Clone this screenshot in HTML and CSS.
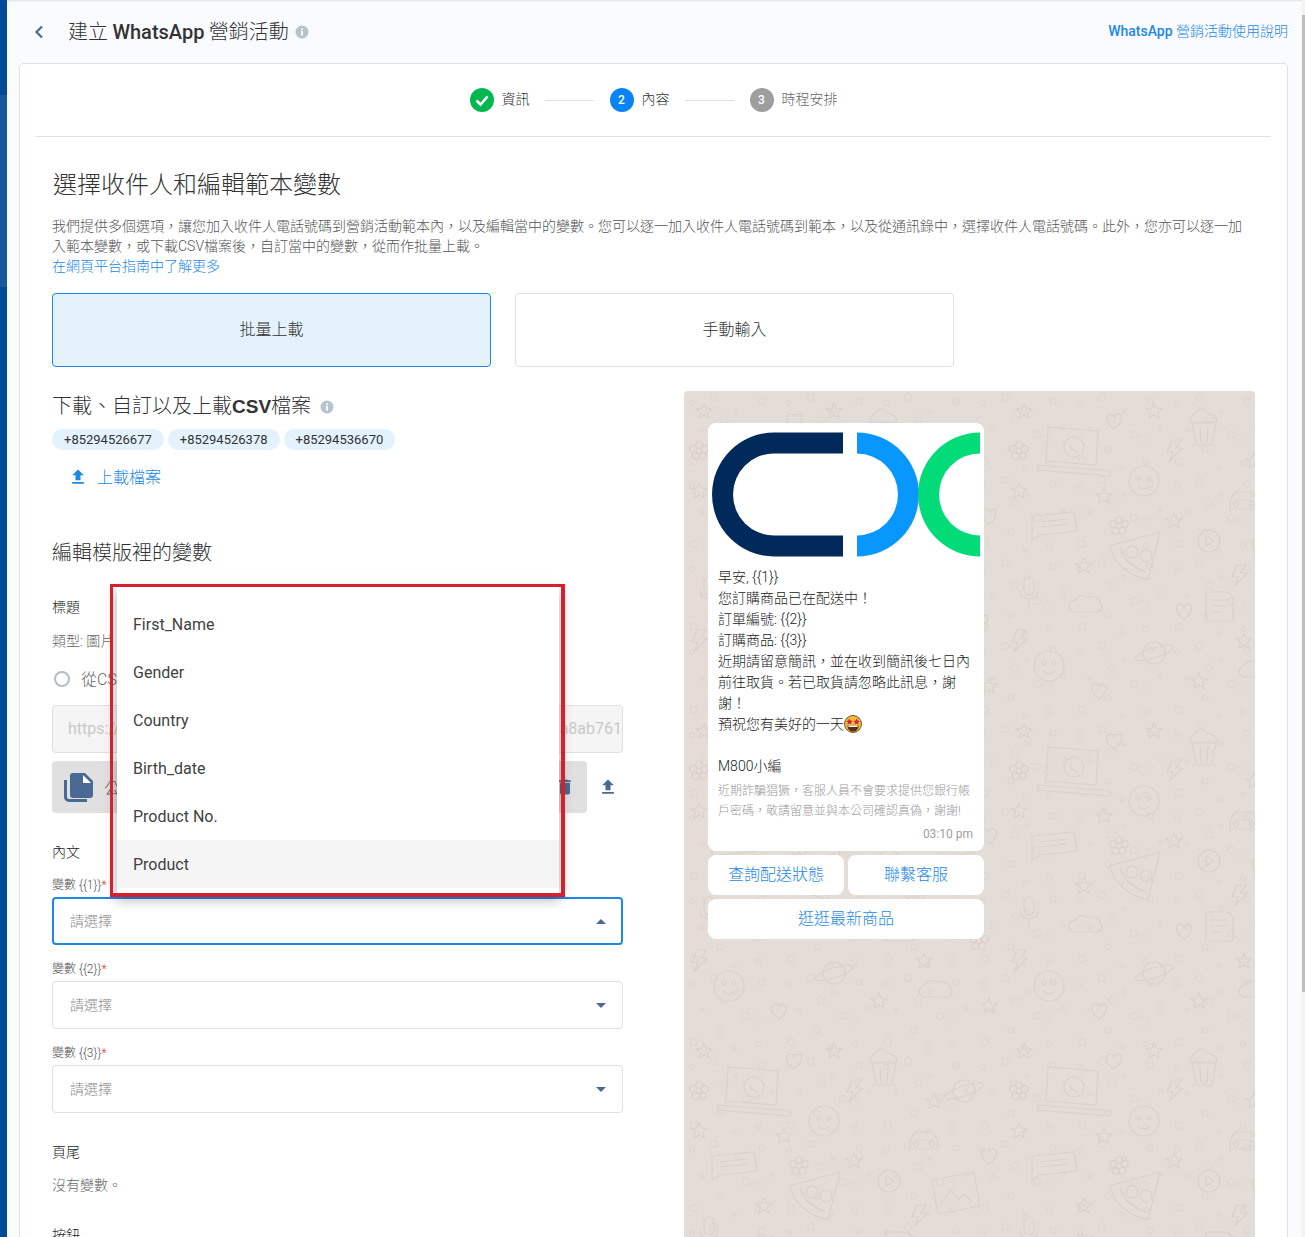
FILE: index.html
```html
<!DOCTYPE html>
<html lang="zh-Hant">
<head>
<meta charset="utf-8">
<title>建立 WhatsApp 營銷活動</title>
<link rel="stylesheet" href="styles.css">
</head>
<body>
<div class="rail">
  <div class="rail-a"></div>
  <div class="rail-b"></div>
  <div class="rail-c"></div>
</div>

<div class="app">
  <header class="topbar">
    <div class="topbar-left">
      <svg class="back" viewBox="0 0 12 16"><path d="M9 2.500 3.500 8 9 13.500" fill="none" stroke="#4a6a94" stroke-width="2.200"/></svg>
      <h1 class="title">建立 <b>WhatsApp</b> 營銷活動</h1>
      <svg class="info" viewBox="0 0 14 14"><circle cx="7" cy="7" r="6.500" fill="#b6c2cc"/><rect x="6.100" y="6" width="1.800" height="4.600" fill="#fff"/><rect x="6.100" y="3.400" width="1.800" height="1.700" fill="#fff"/></svg>
    </div>
    <a class="help"><b>WhatsApp</b> 營銷活動使用說明</a>
  </header>

  <main class="card">
    <div class="stepper">
      <div class="step">
        <span class="dot dot-done"><svg viewBox="0 0 24 24" class="check"><path d="M6.500 12.500 10.500 16.500 17.500 8.500" fill="none" stroke="#fff" stroke-width="2.600"/></svg></span>
        <span class="step-label">資訊</span>
      </div>
      <span class="step-line"></span>
      <div class="step">
        <span class="dot dot-active">2</span>
        <span class="step-label">內容</span>
      </div>
      <span class="step-line"></span>
      <div class="step step-todo">
        <span class="dot dot-todo">3</span>
        <span class="step-label">時程安排</span>
      </div>
    </div>
    <div class="divider"></div>

    <div class="content">
      <h2 class="page-heading">選擇收件人和編輯範本變數</h2>
      <p class="intro">我們提供多個選項，讓您加入收件人電話號碼到營銷活動範本內，以及編輯當中的變數。您可以逐一加入收件人電話號碼到範本，以及從通訊錄中，選擇收件人電話號碼。此外，您亦可以逐一加入範本變數，或下載CSV檔案後，自訂當中的變數，從而作批量上載。<br><a class="link">在網頁平台指南中了解更多</a></p>

      <div class="tabs">
        <div class="tab tab-on"><span class="nudge">批量上載</span></div>
        <div class="tab"><span class="nudge">手動輸入</span></div>
      </div>

      <div class="columns">
        <section class="col-left">
          <h3 class="section-title">下載、自訂以及上載<b class="csv">CSV</b>檔案
            <svg class="info info-inline" viewBox="0 0 14 14"><circle cx="7" cy="7" r="6.500" fill="#b6c2cc"/><rect x="6.100" y="6" width="1.800" height="4.600" fill="#fff"/><rect x="6.100" y="3.400" width="1.800" height="1.700" fill="#fff"/></svg>
          </h3>
          <div class="chips">
            <span class="chip">+85294526677</span>
            <span class="chip">+85294526378</span>
            <span class="chip">+85294536670</span>
          </div>
          <a class="upload-link">
            <svg class="icon20" viewBox="0 0 24 24"><path fill="#1e88e5" d="M9 16h6v-6h4l-7-7-7 7h4zm-4 2h14v2H5z"/></svg>
            <span class="nudge">上載檔案</span>
          </a>

          <h3 class="section-title section-edit">編輯模版裡的變數</h3>
          <div class="field-title ft-header">標題</div>
          <div class="field-type">類型: 圖片</div>
          <label class="radio-row"><span class="radio"></span><span class="nudge">從CSV</span></label>
          <div class="url-input"><span class="nudge">https://</span><span class="nudge">da8ab761</span></div>
          <div class="file-row">
            <div class="file-box">
              <svg class="file-icon" viewBox="0 0 30 29">
                <path fill="#4a6a94" d="M0 7h3v17a2 2 0 0 0 2 2h18v3H5a5 5 0 0 1-5-5z"/>
                <path fill="#4a6a94" d="M9 0h12l8 8v14a3 3 0 0 1-3 3H9a3 3 0 0 1-3-3V3a3 3 0 0 1 3-3z"/>
                <path fill="#fff" d="M19 2l8 8h-8z"/>
              </svg>
              <span class="file-name">公</span>
              <svg class="icon20" viewBox="0 0 24 24"><path fill="#4a6a94" d="M6 19c0 1.100.9 2 2 2h8c1.100 0 2-.9 2-2V7H6v12zM19 4h-3.500l-1-1h-5l-1 1H5v2h14V4z"/></svg>
            </div>
            <svg class="icon20" viewBox="0 0 24 24"><path fill="#4a6a94" d="M9 16h6v-6h4l-7-7-7 7h4zm-4 2h14v2H5z"/></svg>
          </div>

          <div class="field-title ft-body">內文</div>
          <div class="var-label var-first">變數 {{1}}<i>*</i></div>
          <div class="select select-focus"><span class="nudge">請選擇</span><span class="caret caret-up"></span></div>
          <div class="var-label">變數 {{2}}<i>*</i></div>
          <div class="select"><span class="nudge">請選擇</span><span class="caret"></span></div>
          <div class="var-label">變數 {{3}}<i>*</i></div>
          <div class="select"><span class="nudge">請選擇</span><span class="caret"></span></div>

          <div class="field-title ft-footer">頁尾</div>
          <div class="field-note">沒有變數。</div>
          <div class="field-title ft-buttons">按鈕</div>

          <div class="menu-wrap">
            <ul class="menu">
              <li>First_Name</li>
              <li>Gender</li>
              <li>Country</li>
              <li>Birth_date</li>
              <li>Product No.</li>
              <li class="menu-hover">Product</li>
            </ul>
          </div>
        </section>

        <aside class="preview">
          <svg class="doodles" width="100%" height="100%" aria-hidden="true">
            <defs>
              <g id="d-star"><path d="M0-8 2.400-2.500 8-2.200 3.600 1.400 5 7 0 4 -5 7 -3.600 1.400 -8-2.200 -2.400-2.500z"/></g>
              <g id="d-heart"><path d="M0 8C-11 0-8-8-3-7c2 .4 3 2 3 3 0-1 1-2.600 3-3C8-8 11 0 0 8z"/></g>
              <g id="d-cloud"><path d="M-14 6a6 6 0 0 1 0-12c2-5 10-6 13-2 5-3 12 0 12 5a5 5 0 0 1-2 9z"/></g>
              <g id="d-planet"><circle r="11"/><ellipse rx="20" ry="5" transform="rotate(-18)"/></g>
              <g id="d-flower"><circle r="3"/><circle cy="-6" r="3.500"/><circle cx="5.700" cy="-1.900" r="3.500"/><circle cx="3.500" cy="4.900" r="3.500"/><circle cx="-3.500" cy="4.900" r="3.500"/><circle cx="-5.700" cy="-1.900" r="3.500"/></g>
              <g id="d-laptop"><path d="M-26-24 24-20 22 14-28 10z"/><path d="M-36 14 36 20 36 25-36 19z"/><circle r="10" cy="-4"/><path d="M-4-6c0 4 4 7 8 6"/></g>
              <g id="d-chat"><path d="M-22-10 20-14 23 5-14 9-22 14z"/><path d="M-14-4 13-7M-13 1 14-2"/></g>
              <g id="d-pizza"><path d="M-24-10C-20 8-4 20 14 24L26-24z"/><circle cx="-2" cy="-4" r="6"/><circle cx="12" cy="0" r="6"/><path d="M-14-8C-10 4 0 12 12 16"/></g>
              <g id="d-car"><path d="M-14 8v-8l5-9h17l6 9v8z"/><circle cx="-8" cy="3" r="2.500"/><circle cx="8" cy="3" r="2.500"/><path d="M-9-1h18"/></g>
              <g id="d-cup"><path d="M-12-2 -8 20H8L12-2z"/><path d="M-14-3c0-8 6-8 8-11 3-4 8-2 8 2 5 0 11 3 11 9z"/><path d="M-4 2-3 18M4 2 3 18"/></g>
              <g id="d-photo"><path d="M-22-16 20-24 26 10-16 18z"/><path d="M-14 8-3-6 4 4 10-2 18 6"/></g>
              <g id="d-face"><circle r="15"/><circle cx="-5" cy="-3" r="2"/><circle cx="5" cy="-3" r="2"/><path d="M-6 5c3 4 9 4 12 0"/></g>
              <g id="d-bolt"><path d="M-2-11 7-11 2-3 8-3-5 11-1 1-7 1z"/></g>
              <g id="d-mic"><rect x="-5" y="-14" width="10" height="18" rx="5"/><path d="M-9-1c0 12 18 12 18 0M0 10v8"/></g>
              <g id="d-play"><circle r="11"/><path d="M-3-5 5 0-3 5z"/></g>
              <g id="d-note"><path d="M-13-14H9L14-9V15H-13zM-8-6H8M-8 0H8M-8 6H3"/></g>
              <pattern id="tile-fine" width="97" height="83" patternUnits="userSpaceOnUse">
                <g fill="none" stroke="#ddd5cf" stroke-width="1.100">
                  <circle cx="8" cy="12" r="2.500"/><circle cx="30" cy="6" r="3.500"/><circle cx="52" cy="20" r="2"/>
                  <circle cx="78" cy="10" r="3"/><circle cx="18" cy="38" r="2"/><circle cx="62" cy="44" r="3.500"/>
                  <circle cx="88" cy="36" r="2"/><circle cx="36" cy="58" r="3"/><circle cx="10" cy="70" r="3.500"/>
                  <circle cx="74" cy="72" r="2.500"/><circle cx="50" cy="76" r="2"/>
                  <use href="#d-star" x="40" y="34" transform="translate(14 6) scale(.65)"/>
                  <use href="#d-heart" x="120" y="80" transform="scale(.6)"/>
                </g>
              </pattern>
              <pattern id="tile" width="320" height="320" patternUnits="userSpaceOnUse">
                <g fill="none" stroke="#dad1cb" stroke-width="1.200">
                  <use href="#d-laptop" x="70" y="60"/>
                  <use href="#d-cup" x="200" y="34"/>
                  <use href="#d-planet" x="280" y="60"/>
                  <use href="#d-face" x="140" y="90"/>
                  <use href="#d-car" x="240" y="110"/>
                  <use href="#d-chat" x="50" y="135"/>
                  <use href="#d-pizza" x="130" y="165"/>
                  <use href="#d-photo" x="270" y="165"/>
                  <use href="#d-mic" x="25" y="200"/>
                  <use href="#d-play" x="205" y="150"/>
                  <use href="#d-cloud" x="85" y="215"/>
                  <use href="#d-note" x="215" y="215"/>
                  <use href="#d-flower" x="295" y="230"/>
                  <use href="#d-planet" x="150" y="262"/>
                  <use href="#d-face" x="45" y="275"/>
                  <use href="#d-cloud" x="255" y="280"/>
                  <use href="#d-heart" x="110" y="30"/>
                  <use href="#d-heart" x="305" y="125"/>
                  <use href="#d-heart" x="180" y="220"/>
                  <use href="#d-heart" x="95" y="300"/>
                  <use href="#d-star" x="20" y="20"/>
                  <use href="#d-star" x="150" y="20"/>
                  <use href="#d-star" x="250" y="70"/>
                  <use href="#d-star" x="100" y="105"/>
                  <use href="#d-star" x="15" y="100"/>
                  <use href="#d-star" x="170" y="130"/>
                  <use href="#d-star" x="80" y="175"/>
                  <use href="#d-star" x="240" y="250"/>
                  <use href="#d-star" x="195" y="290"/>
                  <use href="#d-star" x="305" y="295"/>
                  <use href="#d-bolt" x="235" y="185"/>
                  <use href="#d-bolt" x="15" y="250"/>
                  <use href="#d-bolt" x="170" y="60"/>
                  <use href="#d-flower" x="115" y="135"/>
                  <use href="#d-flower" x="15" y="60"/>
                </g>
              </pattern>
            </defs>
            <rect width="100%" height="100%" fill="url(#tile-fine)"/>
            <rect width="100%" height="100%" fill="url(#tile)"/>
          </svg>

          <div class="chat">
            <div class="bubble">
              <svg class="logo" viewBox="0 0 268 135">
                <path fill="#012a5a" d="M131 5.500H62a62 62 0 0 0 0 124h69v-21H62a41 41 0 0 1 0-82h69z"/>
                <path fill="#0797fd" d="M145 5.500a62 62 0 0 1 0 124v-21a41 41 0 0 0 0-82z"/>
                <path fill="#02dc78" d="M268 5.500a62 62 0 0 0 0 124v-21a41 41 0 0 1 0-82z"/>
              </svg>
              <div class="bubble-text">早安, {{1}}<br>您訂購商品已在配送中！<br>訂單編號: {{2}}<br>訂購商品: {{3}}<br>近期請留意簡訊，並在收到簡訊後七日內前往取貨。若已取貨請忽略此訊息，謝謝！<br>預祝您有美好的一天<svg class="emoji" viewBox="0 0 18 18"><circle cx="9" cy="9" r="8.500" fill="#f6b93b" stroke="#4a3a1c" stroke-width=".8"/><path d="M3.500 10.500h11c0 4-2.500 6-5.500 6s-5.500-2-5.500-6z" fill="#5b2f14"/><path d="M4.500 10.500h9v1.500h-9z" fill="#fff"/><path fill="#d81f45" d="M5.400 3.600l1 2 2.100.3-1.500 1.500.4 2.100-2-1-1.900 1 .4-2.100L2.400 5.900l2.100-.3zM12.600 3.600l1 2 2.100.3-1.500 1.500.4 2.100-2-1-1.900 1 .4-2.100-1.500-1.500 2.100-.3z"/></svg><br><br>M800小編</div>
              <div class="bubble-foot">近期詐騙猖獗，客服人員不會要求提供您銀行帳戶密碼，敬請留意並與本公司確認真偽，謝謝!</div>
              <div class="bubble-time">03:10 pm</div>
            </div>
            <div class="chat-buttons">
              <div class="chat-btn"><span class="nudge">查詢配送狀態</span></div>
              <div class="chat-btn"><span class="nudge">聯繫客服</span></div>
              <div class="chat-btn chat-btn-wide"><span class="nudge">逛逛最新商品</span></div>
            </div>
          </div>
        </aside>
      </div>
    </div>
  </main>
</div>

<div class="scrollbar"><div class="scroll-thumb"></div></div>
</body>
</html>
```

FILE: styles.css
```css
* { box-sizing: border-box; }
html, body { height: 1237px; }
body {
  margin: 0;
  display: flex;
  overflow: hidden;
  background: #f9fbfe;
  font-family: Roboto, "Noto Sans CJK TC", sans-serif;
  color: #424242;
}
h1, h2, h3, p, ul { margin: 0; padding: 0; font-weight: 400; }

.nudge { padding-bottom: 3px; }
.tab .nudge, .chat-btn .nudge { padding-bottom: 5px; }

/* Left rail and scrollbar */
.rail { width: 7px; flex: none; display: flex; flex-direction: column; }
.rail-a { height: 95px; background: #004a99; }
.rail-b { height: 192px; background: #19589f; }
.rail-c { flex: 1; background: #004a99; }
.scrollbar { width: 3px; flex: none; background: #f3f3f3; padding-top: 15px; }
.scroll-thumb { height: 977px; background: #bdbdbd; }

.app {
  flex: 1;
  min-width: 0;
  padding: 0 14px 0 12px;
  box-shadow: inset 0 2px 2px -1px rgba(0, 0, 0, .1);
}

/* Top bar */
.topbar { height: 63px; display: flex; align-items: center; justify-content: space-between; }
.topbar-left { display: flex; align-items: center; padding-left: 14px; }
.back { width: 12px; height: 16px; margin-right: 23px; }
.title { font-size: 20px; line-height: 28px; font-weight: 300; color: #333; word-spacing: -.5px; }
.title b { font-weight: 500; color: #333; }
.info { width: 14px; height: 14px; margin-left: 6px; flex: none; }
.info-inline { margin-left: 4px; vertical-align: -1px; }
.help { font-size: 14px; font-weight: 300; color: #1e88e5; margin-top: -4px; }
.help b { font-weight: 500; }

/* Card */
.card {
  height: 1300px;
  background: #fff;
  border: 1px solid #e0e0e0;
  border-radius: 4px;
  overflow: hidden;
}
.stepper { height: 72px; display: flex; align-items: center; justify-content: center; }
.step { display: flex; align-items: center; gap: 8px; }
.dot {
  width: 24px; height: 24px; border-radius: 50%;
  display: flex; align-items: center; justify-content: center;
  color: #fff; font-size: 12px; font-weight: 500;
}
.dot-done { background: #00b84f; }
.dot-active { background: #0a84f5; }
.dot-todo { background: #9e9e9e; }
.check { width: 24px; height: 24px; }
.step-label { font-size: 14px; font-weight: 300; color: #333; line-height: 20px; padding-bottom: 2px; }
.step-todo .step-label { color: #666; }
.step-line { width: 49px; height: 1px; background: #e0e0e0; margin: 0 16px 0 15px; }
.divider { height: 1px; background: #e0e0e0; margin: 0 16px; }

.content { padding: 0 32px; }
.page-heading { margin: 32px 0 0 1px; font-size: 24px; line-height: 32px; font-weight: 300; color: #333; }
.intro { margin-top: 15px; font-size: 14px; line-height: 20px; font-weight: 300; color: #555; }
.link { color: #1e88e5; }

.tabs { margin-top: 17px; display: flex; gap: 24px; }
.tab {
  width: 439px; height: 74px;
  display: flex; align-items: center; justify-content: center;
  border: 1px solid #e0e0e0; border-radius: 4px;
  font-size: 16px; font-weight: 300; color: #333; background: #fff;
}
.tab-on { background: #e3f2fd; border-color: #1e88e5; }

.columns { margin-top: 24px; display: grid; grid-template-columns: 571px 571px; gap: 61px; }
.col-left { position: relative; }

.section-title { font-size: 20px; line-height: 28px; font-weight: 300; color: #333; display: block; padding-top: 1px; height: 28px; }
.csv { font-family: "Liberation Sans", sans-serif; font-size: 19px; font-weight: 700; }
.section-edit { margin-top: 49px; }

.chips { margin-top: 10px; display: flex; gap: 4px; }
.chip {
  height: 21px; padding: 0 12px; border-radius: 11px;
  background: #e3f2fd; font-size: 13px; line-height: 21px; color: #333;
}
.upload-link {
  margin-top: 15px; height: 24px; padding-left: 16px;
  display: flex; align-items: center; gap: 9px;
  font-size: 16px; font-weight: 300; color: #1e88e5;
}
.icon20 { width: 20px; height: 20px; flex: none; }

.field-title { font-size: 14px; line-height: 20px; font-weight: 300; color: #222; }
.ft-header { margin-top: 31px; }
.ft-body { margin-top: 29px; }
.ft-footer { margin-top: 29px; }
.ft-buttons { margin-top: 30px; }
.field-type { margin-top: 14px; font-size: 14px; line-height: 20px; font-weight: 300; color: #666; }
.field-note { margin-top: 13px; font-size: 14px; line-height: 20px; font-weight: 300; color: #666; }

.radio-row {
  margin-top: 16px; height: 24px; padding-left: 2px;
  display: flex; align-items: center; gap: 11px;
  font-size: 16px; font-weight: 300; color: #666;
}
.radio { width: 16px; height: 16px; border: 2px solid #b0bec5; border-radius: 50%; flex: none; }

.url-input {
  margin-top: 14px; height: 48px; padding: 0 0 0 15px;
  display: flex; align-items: center; justify-content: space-between;
  background: #f5f5f5; border: 1px solid #e0e0e0; border-radius: 4px;
  font-size: 16px; color: #c9c9c9; overflow: hidden;
}
.url-input .nudge { padding-bottom: 2px; }
.file-row { margin-top: 8px; display: flex; align-items: center; gap: 10.500px; }
.file-box {
  width: 535px; height: 52px; padding: 0 12px;
  display: flex; align-items: center;
  background: #e0e0e0; border-radius: 4px;
}
.file-icon { width: 30px; height: 29px; flex: none; margin-right: 10px; }
.file-name { flex: 1; font-size: 16px; font-weight: 300; color: #666; }

.var-label { margin-top: 16px; font-size: 12px; line-height: 16px; font-weight: 300; color: #555; }
.var-label i { color: #e53935; font-style: normal; }
.var-first { margin-top: 15px; }
.select {
  margin-top: 4px; height: 48px; padding: 0 16px 0 17px;
  display: flex; align-items: center; justify-content: space-between;
  border: 1px solid #e0e0e0; border-radius: 4px; background: #fff;
  font-size: 14px; font-weight: 300; color: #888;
}
.select-focus { border: 2px solid #1e88e5; padding: 0 15px 0 16px; }
.caret { width: 0; height: 0; border: 5px solid transparent; border-top-color: #4a6a94; border-bottom: 0; }
.caret-up { border-top: 0; border-bottom: 5px solid #4a6a94; }

/* Open dropdown with red highlight frame */
.menu-wrap { position: absolute; left: 58px; top: 193px; width: 455px; height: 313px; }
.menu-wrap::after {
  content: ""; position: absolute; inset: 0;
  border: 3px solid #d7202e; border-right-width: 4px; border-bottom-width: 4px;
  pointer-events: none;
}
.menu {
  position: absolute; left: 7px; top: 3px; width: 442px; height: 306px;
  padding-top: 13px; list-style: none; background: #fff;
  box-shadow: 0 5px 5px -3px rgba(0, 0, 0, .2), 0 8px 10px 1px rgba(0, 0, 0, .14), 0 3px 14px 2px rgba(0, 0, 0, .12);
}
.menu li {
  height: 48px; padding-left: 16px;
  display: flex; align-items: center;
  font-size: 16px; color: #424242;
}
.menu .menu-hover { background: #f5f5f5; }

/* WhatsApp preview */
.preview {
  position: relative; height: 860px; padding: 32px 0 0 24px;
  background: #e4dcd6; border-radius: 4px; overflow: hidden;
}
.doodles { position: absolute; inset: 0; }
.chat { position: relative; width: 276px; }
.bubble { background: #fff; border-radius: 8px; padding: 4px 0 9px; height: 428px; }
.logo { display: block; width: 268px; height: 135px; margin: 0 4px; }
.bubble-text { margin-top: 5px; padding: 0 10px; font-size: 14px; line-height: 21px; font-weight: 300; color: #222; }
.emoji { width: 18px; height: 18px; vertical-align: -4px; }
.bubble-foot { margin-top: 4px; padding: 0 10px; font-size: 12px; line-height: 20px; font-weight: 300; color: #999; }
.bubble-time { margin-top: 5px; padding-right: 11px; text-align: right; font-size: 12px; line-height: 16px; color: #9e9e9e; }
.chat-buttons { margin-top: 4px; display: grid; grid-template-columns: 1fr 1fr; gap: 4px; }
.chat-btn {
  height: 40px; background: #fff; border-radius: 8px;
  display: flex; align-items: center; justify-content: center;
  font-size: 16px; font-weight: 300; color: #1e88e5;
}
.chat-btn-wide { grid-column: span 2; }
```
